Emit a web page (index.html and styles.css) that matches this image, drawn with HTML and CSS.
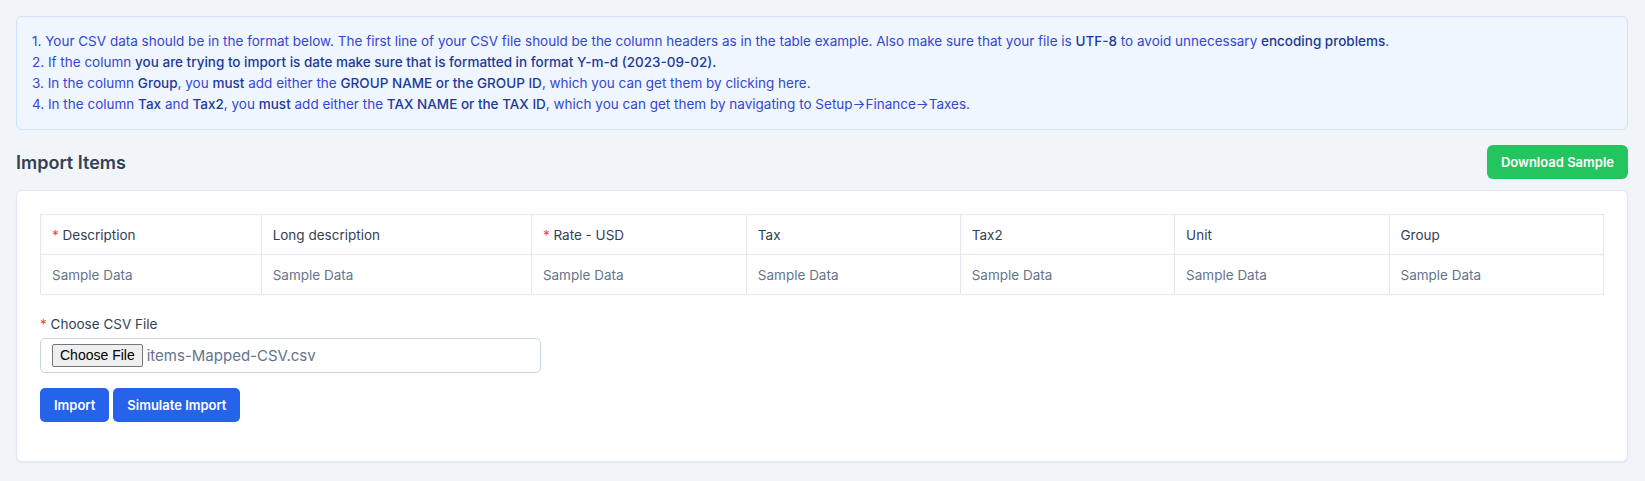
FILE: index.html
```html
<html>
<head>
    <title>Import Items</title>
    <meta charset="UTF-8" name="viewport" content="width=device-width, initial-scale=1">
    <link rel="stylesheet" href="styles.css">
</head>

<body>
    <div class="page">
        <div class="alert">
            1. Your CSV data should be in the format below. The first line of your CSV file should be the column headers as in the table example. Also make sure that your file is <b>UTF-8</b> to avoid unnecessary <b>encoding problems</b>.<br>
            2. If the column <b>you are trying to import is date make sure that is formatted in format Y-m-d (2023-09-02).</b><br>
            3. In the column <b>Group</b>, you <b>must</b> add either the <b>GROUP NAME or the GROUP ID</b>, which you can get them by clicking <a href="#">here</a>.<br>
            4. In the column <b>Tax</b> and <b>Tax2</b>, you <b>must</b> add either the <b>TAX NAME or the TAX ID</b>, which you can get them by navigating to Setup&rarr;Finance&rarr;Taxes.
        </div>

        <div class="title-bar">
            <h4>Import Items</h4>
            <button class="btn btn-green">Download Sample</button>
        </div>

        <div class="card">
            <table class="sample">
                <thead>
                    <tr>
                        <th class="c1"><span class="req">*</span> Description</th>
                        <th class="c2">Long description</th>
                        <th class="c3"><span class="req">*</span> Rate - USD</th>
                        <th class="c4">Tax</th>
                        <th class="c5">Tax2</th>
                        <th class="c5">Unit</th>
                        <th class="c5">Group</th>
                    </tr>
                </thead>
                <tbody>
                    <tr>
                        <td>Sample Data</td>
                        <td>Sample Data</td>
                        <td>Sample Data</td>
                        <td>Sample Data</td>
                        <td>Sample Data</td>
                        <td>Sample Data</td>
                        <td>Sample Data</td>
                    </tr>
                </tbody>
            </table>

            <div class="form-group">
                <label><span class="req">*</span> Choose CSV File</label>
                <div class="file-input">
                    <span class="file-btn">Choose File</span>
                    <span class="file-name">items-Mapped-CSV.csv</span>
                </div>
            </div>

            <div class="actions">
                <button class="btn btn-blue">Import</button>
                <button class="btn btn-blue">Simulate Import</button>
            </div>
        </div>
    </div>
</body>
</html>
```

FILE: styles.css
```css
html {
    background-color: #f1f5f9;
}

body {
    margin: 0;
    font-family: Inter, "Noto Sans", sans-serif;
    font-size: 13.5px;
    color: #334155;
}

.page {
    padding: 16px 17px 16px 16px;
}

.alert {
    background-color: #eff6ff;
    border: 1px solid #cfe2fd;
    border-radius: 6px;
    padding: 14px 15px;
    color: #3446d2;
    line-height: 21px;
}

.alert b {
    font-weight: 500;
    color: #1e3a9a;
}

.alert a {
    color: #3446d2;
    text-decoration: none;
}

.title-bar {
    display: flex;
    justify-content: space-between;
    align-items: center;
    margin-top: 15px;
    margin-bottom: 11px;
}

h4 {
    margin: 0;
    font-size: 18px;
    font-weight: 600;
    color: #334155;
}

.btn {
    font-family: Inter, "Noto Sans", sans-serif;
    font-size: 13px;
    font-weight: 600;
    color: white;
    border: none;
    cursor: pointer;
    height: 34px;
    padding: 0 14px;
}

.btn-green {
    background-color: #22c55e;
    border-radius: 6px;
}

.btn-blue {
    background-color: #2563eb;
    border-radius: 5px;
}

.card {
    background-color: white;
    border: 1px solid #e2e8f0;
    border-radius: 6px;
    box-shadow: 0 1px 2px rgba(15, 23, 42, 0.06);
    padding: 23px 23px 39px 23px;
}

.sample {
    width: 100%;
    border-collapse: collapse;
    table-layout: fixed;
    font-size: 13.5px;
}

.sample th,
.sample td {
    border: 1px solid #e2e8f0;
    text-align: left;
    height: 40px;
    padding: 0 11px;
    font-weight: 400;
    white-space: nowrap;
}

.sample th {
    color: #334155;
}

.sample td {
    color: #64748b;
}

.c1 { width: 14.1%; }
.c2 { width: 17.6%; }
.c3 { width: 13.7%; }
.c4 { width: 13.62%; }
.c5 { width: 13.66%; }

.req {
    color: #ef4444;
}

.form-group {
    margin-top: 21px;
}

label {
    display: block;
    line-height: 17px;
    margin-bottom: 5px;
    color: #334155;
}

.file-input {
    display: flex;
    align-items: center;
    width: 477px;
    height: 33px;
    border: 1px solid #cbd5e1;
    border-radius: 5px;
    padding: 0 11px;
}

.file-btn {
    font-family: Arial, "Liberation Sans", sans-serif;
    font-size: 14px;
    line-height: 17px;
    color: black;
    background-color: #efefef;
    border: 1px solid #767676;
    border-radius: 2px;
    padding: 2px 7px;
    margin-right: 4px;
}

.file-name {
    font-size: 15px;
    color: #64748b;
}

.actions {
    display: flex;
    gap: 4px;
    margin-top: 15px;
}
```
